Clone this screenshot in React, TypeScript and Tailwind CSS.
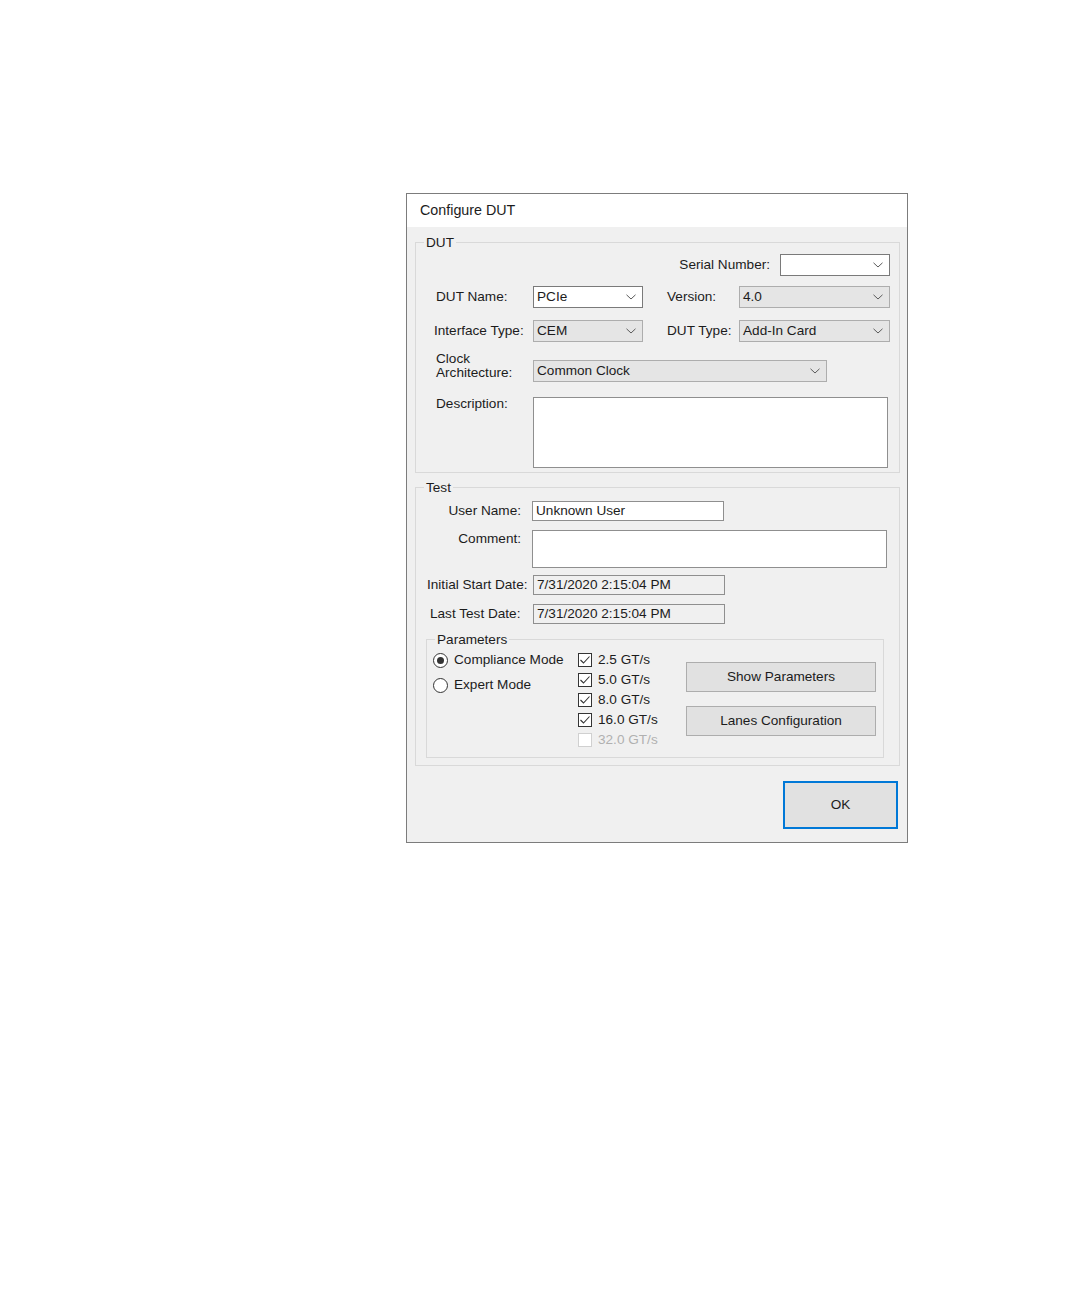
import React from "react";

const Chevron = () => (
  <svg width="10" height="6" viewBox="0 0 10 6" className="shrink-0">
    <path d="M0.5 0.8 L5 5 L9.5 0.8" stroke="#5a5a5a" strokeWidth="1" fill="none" />
  </svg>
);

function Combo({ w, value, white }: { w: string; value?: string; white?: boolean }) {
  return (
    <div
      className={`${w} h-[22px] flex items-center justify-between pl-[3px] pr-[6px] border ${
        white ? "bg-white border-[#7a7a7a]" : "bg-[#e5e5e5] border-[#adadad]"
      }`}
    >
      <span className="leading-none">{value ?? ""}</span>
      <Chevron />
    </div>
  );
}

function Group({
  title,
  className,
  children,
}: {
  title: string;
  className: string;
  children: React.ReactNode;
}) {
  return (
    <div className={`relative border border-[#d9d9d9] ${className}`}>
      <span className="absolute -top-[8px] left-[8px] px-[2px] bg-[#f0f0f0] leading-[16px]">{title}</span>
      {children}
    </div>
  );
}

function Check({ label, checked, disabled }: { label: string; checked?: boolean; disabled?: boolean }) {
  return (
    <div className="flex items-center h-[16px]">
      <div
        className={`w-[14px] h-[14px] border flex items-center justify-center ${
          disabled ? "border-[#d0d0d0] bg-white" : "border-[#333] bg-white"
        }`}
      >
        {checked && (
          <svg width="12" height="12" viewBox="0 0 12 12">
            <path d="M1.5 6 L4.5 9 L10.5 2.5" stroke="#333" strokeWidth="1.1" fill="none" />
          </svg>
        )}
      </div>
      <span className={`ml-[6px] ${disabled ? "text-[#b0b0b0]" : ""}`}>{label}</span>
    </div>
  );
}

function Radio({ label, checked }: { label: string; checked?: boolean }) {
  return (
    <div className="flex items-center h-[16px]">
      <div className="w-[15px] h-[15px] rounded-full border border-[#333] bg-white flex items-center justify-center">
        {checked && <div className="w-[7px] h-[7px] rounded-full bg-[#333]" />}
      </div>
      <span className="ml-[6px]">{label}</span>
    </div>
  );
}

export default function App() {
  return (
    <div className="w-[1080px] h-[1296px] bg-white pt-[193px] pl-[406px] font-['Liberation_Sans',Arial,sans-serif] text-[13.6px] text-[#1c1c1c]">
      <div className="w-[502px] h-[650px] border border-[#7c7c7c] bg-[#f0f0f0] flex flex-col">
        {/* Title */}
        <div className="h-[33px] bg-white pl-[13px] flex items-center text-[14.3px]">Configure DUT</div>

        <div className="pl-[8px]">
          {/* DUT group */}
          <Group title="DUT" className="mt-[15px] w-[485px] h-[231px]">
            {/* Serial number */}
            <div className="mt-[11px] h-[22px] flex items-center justify-end pr-[9px]">
              <span>Serial Number:</span>
              <div className="ml-[10px]">
                <Combo w="w-[110px]" white />
              </div>
            </div>
            {/* DUT Name / Version */}
            <div className="mt-[10px] h-[22px] flex items-center">
              <span className="ml-[20px] w-[97px]">DUT Name:</span>
              <Combo w="w-[110px]" value="PCIe" white />
              <span className="ml-[24px] w-[72px]">Version:</span>
              <Combo w="w-[151px]" value="4.0" />
            </div>
            {/* Interface / DUT Type */}
            <div className="mt-[12px] h-[22px] flex items-center">
              <span className="ml-[18px] w-[99px]">Interface Type:</span>
              <Combo w="w-[110px]" value="CEM" />
              <span className="ml-[24px] w-[72px]">DUT Type:</span>
              <Combo w="w-[151px]" value="Add-In Card" />
            </div>
            {/* Clock */}
            <div className="mt-[18px] h-[22px] flex items-start">
              <span className="ml-[20px] w-[97px] leading-[14px] -mt-[8px]">
                Clock
                <br />
                Architecture:
              </span>
              <Combo w="w-[294px]" value="Common Clock" />
            </div>
            {/* Description */}
            <div className="mt-[15px] flex items-start">
              <span className="ml-[20px] w-[97px] leading-[14px]">Description:</span>
              <div className="w-[355px] h-[71px] bg-white border border-[#8f8f8f]" />
            </div>
          </Group>

          {/* Test group */}
          <Group title="Test" className="mt-[14px] w-[485px] h-[279px]">
            <div className="mt-[13px] h-[20px] flex items-center">
              <span className="w-[105px] text-right">User Name:</span>
              <div className="ml-[11px] w-[192px] h-[20px] bg-white border border-[#8f8f8f] flex items-center pl-[3px]">
                Unknown User
              </div>
            </div>
            <div className="mt-[9px] flex items-start">
              <span className="w-[105px] text-right pt-[2px] leading-[14px]">Comment:</span>
              <div className="ml-[11px] w-[355px] h-[38px] bg-white border border-[#8f8f8f]" />
            </div>
            <div className="mt-[7px] h-[20px] flex items-center">
              <span className="ml-[11px] w-[106px]">Initial Start Date:</span>
              <div className="w-[192px] h-[20px] border border-[#8f8f8f] flex items-center pl-[3px]">
                7/31/2020 2:15:04 PM
              </div>
            </div>
            <div className="mt-[9px] h-[20px] flex items-center">
              <span className="ml-[14px] w-[103px]">Last Test Date:</span>
              <div className="w-[192px] h-[20px] border border-[#8f8f8f] flex items-center pl-[3px]">
                7/31/2020 2:15:04 PM
              </div>
            </div>

            {/* Parameters */}
            <Group title="Parameters" className="mt-[15px] ml-[10px] w-[458px] h-[119px]">
              <div className="flex">
                <div className="ml-[6px] mt-[12px] w-[145px] flex flex-col gap-[9px]">
                  <Radio label="Compliance Mode" checked />
                  <Radio label="Expert Mode" />
                </div>
                <div className="mt-[12px] w-[108px] flex flex-col gap-[4px]">
                  <Check label="2.5 GT/s" checked />
                  <Check label="5.0 GT/s" checked />
                  <Check label="8.0 GT/s" checked />
                  <Check label="16.0 GT/s" checked />
                  <Check label="32.0 GT/s" disabled />
                </div>
                <div className="mt-[22px] flex flex-col gap-[14px]">
                  <div className="w-[190px] h-[30px] bg-[#e1e1e1] border border-[#adadad] flex items-center justify-center">
                    Show Parameters
                  </div>
                  <div className="w-[190px] h-[30px] bg-[#e1e1e1] border border-[#adadad] flex items-center justify-center">
                    Lanes Configuration
                  </div>
                </div>
              </div>
            </Group>
          </Group>
        </div>

        {/* OK */}
        <div className="mt-[15px] flex justify-end pr-[9px]">
          <div className="w-[115px] h-[48px] bg-[#e1e1e1] border-2 border-[#0078d7] flex items-center justify-center">
            OK
          </div>
        </div>
      </div>
    </div>
  );
}
